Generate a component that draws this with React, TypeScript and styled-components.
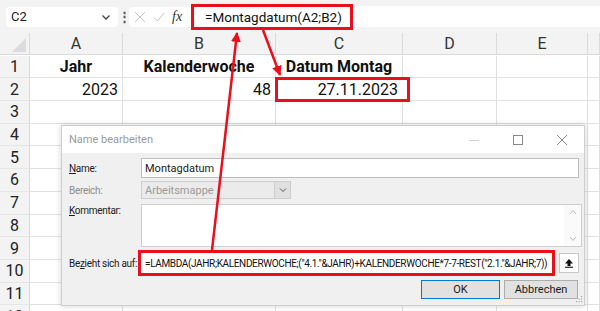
import { Fragment } from 'react';
import styled, { createGlobalStyle } from 'styled-components';

const GlobalStyle = createGlobalStyle`
  html, body {
    margin: 0;
    padding: 0;
    background: #fff;
    overflow: hidden;
  }
  body {
    font-family: Roboto, "Liberation Sans", sans-serif;
  }
`;

const RED = '#e8101c';

const Page = styled.div`
  position: relative;
  width: 600px;
  height: 311px;
  overflow: hidden;
  background: #fff;
`;

const TopBar = styled.div`
  height: 33px;
  background: #f3f3f3;
  display: flex;
  align-items: center;
  padding-left: 6px;
  box-sizing: border-box;
`;

const NameBox = styled.div`
  width: 112px;
  height: 20px;
  background: #fff;
  border-radius: 4px;
  display: flex;
  align-items: center;
  justify-content: space-between;
  padding: 0 6px 0 5px;
  box-sizing: border-box;
  font-size: 13px;
  color: #222;
  svg {
    width: 12px;
    height: 12px;
    color: #444;
  }
`;

const Dots = styled.div`
  width: 11px;
  text-align: center;
  font-size: 13px;
  font-weight: bold;
  color: #555;
`;

const FxBox = styled.div`
  width: 64px;
  height: 20px;
  background: #fff;
  border-radius: 4px;
  display: flex;
  align-items: center;
  gap: 7px;
  padding-left: 5px;
  box-sizing: border-box;
  color: #c4c4c4;
  svg {
    width: 12px;
    height: 12px;
  }
`;

const Fx = styled.span`
  font-family: "Liberation Serif", serif;
  font-style: italic;
  font-size: 14px;
  color: #333;
`;

const FormulaInput = styled.div`
  flex: 1;
  height: 21px;
  margin-left: 2px;
  background: #fff;
  display: flex;
  align-items: center;
`;

const Highlight = styled.div`
  height: 26px;
  margin-left: -4px;
  border: 3px solid ${RED};
  box-sizing: border-box;
  display: flex;
  align-items: center;
  padding: 0 8px 0 11px;
  font-size: 13.5px;
  color: #111;
`;

const Grid = styled.div`
  display: grid;
  grid-template-columns: 30px 93px 153px 127px 94px 91px 12px;
  grid-auto-rows: 22.7px;
`;

const Corner = styled.div`
  height: 22px;
  background: #f3f3f3;
  position: relative;
  border-right: 1px solid #dadada;
  border-bottom: 1px solid #dadada;
  box-sizing: border-box;
  &::after {
    content: '';
    position: absolute;
    right: 3px;
    bottom: 2px;
    border-style: solid;
    border-width: 0 0 14px 14px;
    border-color: transparent transparent #dcdcdc transparent;
  }
`;

const ColHead = styled.div`
  height: 22px;
  background: #f3f3f3;
  border-right: 1px solid #dadada;
  border-bottom: 1px solid #dadada;
  box-sizing: border-box;
  display: flex;
  align-items: center;
  justify-content: center;
  font-size: 16px;
  color: #333;
`;

const RowHead = styled.div`
  background: #f3f3f3;
  border-right: 1px solid #dadada;
  border-bottom: 1px solid #e6e6e6;
  box-sizing: border-box;
  display: flex;
  align-items: center;
  justify-content: center;
  font-size: 16px;
  color: #222;
`;

const Cell = styled.div<{ $align?: 'left' | 'center' | 'right'; $bold?: boolean; $marked?: boolean }>`
  border-right: 1px solid #e0e0e0;
  border-bottom: 1px solid #e0e0e0;
  box-sizing: border-box;
  display: flex;
  align-items: center;
  justify-content: ${(p) => (p.$align === 'center' ? 'center' : p.$align === 'right' ? 'flex-end' : 'flex-start')};
  padding: 0 4px;
  font-size: 16px;
  font-weight: ${(p) => (p.$bold ? 700 : 400)};
  color: #111;
  white-space: nowrap;
  ${(p) => p.$marked && `outline: 3px solid ${RED}; outline-offset: -2px; margin-right: -6px; padding-right: 10px; position: relative; z-index: 1;`}
`;

const Dialog = styled.div`
  position: absolute;
  left: 61px;
  top: 125px;
  width: 524px;
  height: 181px;
  background: #f0f0f0;
  border: 1px solid #cfcfcf;
  box-shadow: 0 0 6px rgba(0, 0, 0, 0.18);
  box-sizing: border-box;
  display: flex;
  flex-direction: column;
  font-family: Roboto, "Liberation Sans", sans-serif;
  font-size: 11px;
  color: #1a1a1a;
`;

const TitleBar = styled.div`
  height: 27px;
  background: #fff;
  display: flex;
  align-items: center;
  padding-left: 7px;
  color: #9a9a9a;
  font-size: 11px;
`;

const WinControls = styled.div`
  margin-left: auto;
  display: flex;
  align-items: center;
  color: #888;
  svg {
    width: 44px;
    height: 12px;
  }
`;

const Form = styled.div`
  display: grid;
  grid-template-columns: 72px minmax(0, 1fr);
  row-gap: 3px;
  padding: 5px 5px 0 7px;
`;

const Label = styled.div<{ $muted?: boolean; $top?: boolean }>`
  display: flex;
  align-items: ${(p) => (p.$top ? 'flex-start' : 'center')};
  padding-top: ${(p) => (p.$top ? '3px' : '0')};
  color: ${(p) => (p.$muted ? '#8c8c8c' : '#1a1a1a')};
  font-size: 10px;
  letter-spacing: -0.3px;
  white-space: nowrap;
  u {
    text-decoration-thickness: 1px;
  }
`;

const TextInput = styled.div`
  height: 20px;
  background: #fff;
  border: 1px solid #bdbdbd;
  box-sizing: border-box;
  display: flex;
  align-items: center;
  padding-left: 3px;
  font-size: 11px;
`;

const Select = styled.div`
  width: 150px;
  height: 18px;
  background: #ebebeb;
  border: 1px solid #cdcdcd;
  box-sizing: border-box;
  display: flex;
  align-items: center;
  padding-left: 3px;
  color: #9a9a9a;
  font-size: 11px;
`;

const SelectButton = styled.div`
  margin-left: auto;
  width: 15px;
  height: 16px;
  background: #e0e0e0;
  border-left: 1px solid #cdcdcd;
  display: flex;
  align-items: center;
  justify-content: center;
  color: #555;
  svg {
    width: 8px;
    height: 8px;
  }
`;

const TextArea = styled.div`
  height: 43px;
  margin-top: 2px;
  margin-right: -3px;
  background: #fff;
  border: 1px solid #cdcdcd;
  box-sizing: border-box;
  display: flex;
  justify-content: flex-end;
`;

const ScrollBar = styled.div`
  width: 17px;
  display: flex;
  flex-direction: column;
  justify-content: space-between;
  align-items: center;
  padding: 4px 0;
  background: #fafafa;
  color: #bbb;
  svg {
    width: 8px;
    height: 6px;
  }
`;

const RefRow = styled.div`
  display: flex;
  align-items: center;
  gap: 4px;
  min-width: 0;
`;

const RefInput = styled.div`
  flex: 1;
  min-width: 0;
  height: 26px;
  margin-left: -3px;
  border: 3px solid ${RED};
  background: #fff;
  box-sizing: border-box;
  display: flex;
  align-items: center;
  padding-left: 4px;
  font-size: 10px;
  letter-spacing: -0.35px;
  white-space: nowrap;
  overflow: hidden;
  color: #111;
`;

const CollapseButton = styled.div`
  width: 20px;
  height: 20px;
  flex-shrink: 0;
  background: #fff;
  border: 1px solid #c8c8c8;
  box-sizing: border-box;
  display: flex;
  align-items: center;
  justify-content: center;
  svg {
    width: 10px;
    height: 10px;
  }
`;

const Buttons = styled.div`
  display: flex;
  justify-content: flex-end;
  gap: 4px;
  padding: 4px 6px 0 0;
`;

const Button = styled.div<{ $primary?: boolean }>`
  width: ${(p) => (p.$primary ? '79px' : '74px')};
  height: 19px;
  background: #e1e1e1;
  border: 1px solid ${(p) => (p.$primary ? '#0078d7' : '#adadad')};
  box-sizing: border-box;
  display: flex;
  align-items: center;
  justify-content: center;
  font-size: 11px;
`;

const Grip = styled.svg`
  position: absolute;
  right: 1px;
  bottom: 1px;
  width: 9px;
  height: 9px;
`;

const Arrows = styled.svg`
  position: absolute;
  inset: 0;
  width: 600px;
  height: 311px;
  pointer-events: none;
`;

const columns = ['A', 'B', 'C', 'D', 'E', ''];

type CellData = { text?: string; align?: 'left' | 'center' | 'right'; bold?: boolean; marked?: boolean };
type Row = { n: number; cells: CellData[] };

const rows: Row[] = [
  { n: 1, cells: [{ text: 'Jahr', align: 'center', bold: true }, { text: 'Kalenderwoche', align: 'center', bold: true }, { text: 'Datum Montag', align: 'center', bold: true }, {}, {}, {}] },
  { n: 2, cells: [{ text: '2023', align: 'right' }, { text: '48', align: 'right' }, { text: '27.11.2023', align: 'right', marked: true }, {}, {}, {}] },
  ...[3, 4, 5, 6, 7, 8, 9, 10, 11, 12].map((n) => ({ n, cells: [{}, {}, {}, {}, {}, {}] })),
];

export default function App() {
  return (
    <Page>
      <GlobalStyle />
      <TopBar>
        <NameBox>
          C2
          <svg viewBox="0 0 12 12" fill="none" stroke="currentColor" strokeWidth="1.3">
            <path d="M2.5 4.5 6 8l3.5-3.5" />
          </svg>
        </NameBox>
        <Dots>⋮</Dots>
        <FxBox>
          <svg viewBox="0 0 12 12" fill="none" stroke="currentColor" strokeWidth="1">
            <path d="M1 1l10 10M11 1 1 11" />
          </svg>
          <svg viewBox="0 0 12 12" fill="none" stroke="currentColor" strokeWidth="1">
            <path d="M1 6.5 4.5 10 11 2" />
          </svg>
          <Fx>fx</Fx>
        </FxBox>
        <FormulaInput>
          <Highlight>=Montagdatum(A2;B2)</Highlight>
        </FormulaInput>
      </TopBar>

      <Grid>
        <Corner />
        {columns.map((c, i) => (
          <ColHead key={i}>{c}</ColHead>
        ))}
        {rows.map((r) => (
          <Fragment key={r.n}>
            <RowHead>{r.n}</RowHead>
            {r.cells.map((c, i) => (
              <Cell key={i} $align={c.align} $bold={c.bold} $marked={c.marked}>
                {c.text}
              </Cell>
            ))}
          </Fragment>
        ))}
      </Grid>

      <Dialog>
        <TitleBar>
          Name bearbeiten
          <WinControls>
            <svg viewBox="0 0 44 12" fill="none" stroke="#d0d0d0" strokeWidth="1">
              <path d="M17 6.5h10" />
            </svg>
            <svg viewBox="0 0 44 12" fill="none" stroke="currentColor" strokeWidth="1">
              <rect x="17.5" y="1.5" width="9" height="9" />
            </svg>
            <svg viewBox="0 0 44 12" fill="none" stroke="currentColor" strokeWidth="1">
              <path d="M17 1l10 10M27 1 17 11" />
            </svg>
          </WinControls>
        </TitleBar>
        <Form>
          <Label>
            <span><u>N</u>ame:</span>
          </Label>
          <TextInput>Montagdatum</TextInput>

          <Label $muted>Bereich:</Label>
          <Select>
            Arbeitsmappe
            <SelectButton>
              <svg viewBox="0 0 8 8" fill="none" stroke="currentColor" strokeWidth="1">
                <path d="M1 2.5 4 5.5 7 2.5" />
              </svg>
            </SelectButton>
          </Select>

          <Label $top>
            <span><u>K</u>ommentar:</span>
          </Label>
          <TextArea>
            <ScrollBar>
              <svg viewBox="0 0 8 6" fill="none" stroke="currentColor" strokeWidth="1">
                <path d="M1 5 4 1.5 7 5" />
              </svg>
              <svg viewBox="0 0 8 6" fill="none" stroke="currentColor" strokeWidth="1">
                <path d="M1 1 4 4.5 7 1" />
              </svg>
            </ScrollBar>
          </TextArea>

          <Label>
            <span>Be<u>z</u>ieht sich auf:</span>
          </Label>
          <RefRow>
            <RefInput>=LAMBDA(JAHR;KALENDERWOCHE;("4.1."&amp;JAHR)+KALENDERWOCHE*7-7-REST("2.1."&amp;JAHR;7))</RefInput>
            <CollapseButton>
              <svg viewBox="0 0 10 10" fill="#111">
                <path d="M5 1 1 5.5h2.5V8h3V5.5H9z" />
                <rect x="1" y="8.7" width="8" height="1.1" />
              </svg>
            </CollapseButton>
          </RefRow>
        </Form>
        <Buttons>
          <Button $primary>OK</Button>
          <Button>Abbrechen</Button>
        </Buttons>
        <Grip viewBox="0 0 9 9" fill="#a8a8a8">
          <rect x="7" y="1" width="1.2" height="1.2" />
          <rect x="4.5" y="3.5" width="1.2" height="1.2" />
          <rect x="7" y="3.5" width="1.2" height="1.2" />
          <rect x="2" y="6" width="1.2" height="1.2" />
          <rect x="4.5" y="6" width="1.2" height="1.2" />
          <rect x="7" y="6" width="1.2" height="1.2" />
        </Grip>
      </Dialog>

      <Arrows viewBox="0 0 600 311">
        <defs>
          <marker id="head" viewBox="0 0 10 10" refX="9" refY="5" markerWidth="4" markerHeight="4" orient="auto">
            <path d="M0 0 10 5 0 10z" fill={RED} />
          </marker>
        </defs>
        <path d="M212 250 237 33" stroke={RED} strokeWidth="2.5" fill="none" markerEnd="url(#head)" />
        <path d="M263 30 280 75" stroke={RED} strokeWidth="2.5" fill="none" markerEnd="url(#head)" />
      </Arrows>
    </Page>
  );
}
